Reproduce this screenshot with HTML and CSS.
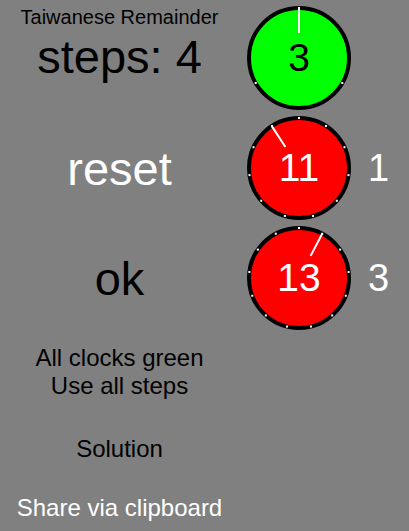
FILE: index.html
```html
<!DOCTYPE html>
<html lang="en">
<head>
<meta charset="utf-8">
<title>Taiwanese Remainder</title>
<link rel="stylesheet" href="styles.css">
</head>
<body>
<main class="page">
  <section class="board">
    <div class="cell left head">
      <div class="title">Taiwanese Remainder</div>
      <div class="big">steps: 4</div>
    </div>
    <div class="cell clock">
      <svg width="110" height="110" viewBox="0 0 110 110">
        <circle cx="55" cy="55" r="50" fill="#00ff00" stroke="#000" stroke-width="4"/>
        <g fill="#fff">
          <rect x="54" y="4" width="2" height="2"/>
          <rect x="97.3" y="79" width="2" height="2"/>
          <rect x="10.7" y="79" width="2" height="2"/>
        </g>
        <line x1="55" y1="5" x2="55" y2="30" stroke="#fff" stroke-width="2"/>
        <text x="55" y="68" class="num dark">3</text>
      </svg>
    </div>
    <div class="cell right"></div>

    <div class="cell left"><button class="big light">reset</button></div>
    <div class="cell clock">
      <svg width="110" height="110" viewBox="0 0 110 110" id="c11">
        <circle cx="55" cy="55" r="50" fill="#ff0000" stroke="#000" stroke-width="4"/>
        <g fill="#fff" class="ticks"></g>
        <line x1="27.8" y1="13.1" x2="41.4" y2="34.0" stroke="#fff" stroke-width="2"/>
        <text x="55" y="68" class="num light">11</text>
      </svg>
    </div>
    <div class="cell right light">1</div>

    <div class="cell left"><button class="big dark">ok</button></div>
    <div class="cell clock">
      <svg width="110" height="110" viewBox="0 0 110 110" id="c13">
        <circle cx="55" cy="55" r="50" fill="#ff0000" stroke="#000" stroke-width="4"/>
        <g fill="#fff" class="ticks"></g>
        <line x1="78.2" y1="10.7" x2="66.6" y2="32.9" stroke="#fff" stroke-width="2"/>
        <text x="55" y="68" class="num light">13</text>
      </svg>
    </div>
    <div class="cell right light">3</div>
  </section>

  <section class="info">
    <p class="rules">All clocks green<br>Use all steps</p>
    <p class="solution">Solution</p>
    <p class="share">Share via clipboard</p>
  </section>
</main>
<script>
  [["c11", 11], ["c13", 13]].forEach(function (c) {
    var g = document.querySelector("#" + c[0] + " .ticks");
    for (var i = 0; i < c[1]; i++) {
      var a = 2 * Math.PI * i / c[1];
      var x = 55 + 50 * Math.sin(a), y = 55 - 50 * Math.cos(a);
      var r = document.createElementNS("http://www.w3.org/2000/svg", "rect");
      r.setAttribute("x", (x - 1).toFixed(2));
      r.setAttribute("y", (y - 1).toFixed(2));
      r.setAttribute("width", "2");
      r.setAttribute("height", "2");
      g.appendChild(r);
    }
  });
</script>
</body>
</html>
```

FILE: styles.css
```css
html, body {
  margin: 0;
  padding: 0;
  background: #808080;
  font-family: "Liberation Sans", Arial, sans-serif;
  color: #000;
}

.page {
  width: 409px;
  height: 531px;
  overflow: hidden;
}

.board {
  display: grid;
  grid-template-columns: 239px 120px 1fr;
  grid-auto-rows: 110px;
  padding-top: 3px;
}

.cell {
  display: flex;
  align-items: center;
}

.left {
  justify-content: center;
  text-align: center;
}

.head {
  flex-direction: column;
  justify-content: flex-start;
  padding-top: 3px;
}

.title {
  font-size: 20px;
}

.big {
  font-size: 47px;
}

button.big {
  background: none;
  border: 0;
  padding: 0;
  margin: 0;
  font-family: inherit;
  line-height: normal;
  cursor: pointer;
}

.clock {
  justify-content: center;
}

.clock svg {
  display: block;
}

.right {
  padding-left: 9px;
  font-size: 38px;
}

.num {
  font-family: "Liberation Sans", Arial, sans-serif;
  font-size: 39px;
  text-anchor: middle;
}

.light {
  color: #fff;
  fill: #fff;
}

.dark {
  color: #000;
  fill: #000;
}

.info {
  width: 239px;
  text-align: center;
  font-size: 24px;
}

.info p {
  margin: 0;
}

.rules {
  margin-top: 11px !important;
}

.solution {
  margin-top: 35px !important;
}

.share {
  margin-top: 31px !important;
  color: #fff;
}
```
